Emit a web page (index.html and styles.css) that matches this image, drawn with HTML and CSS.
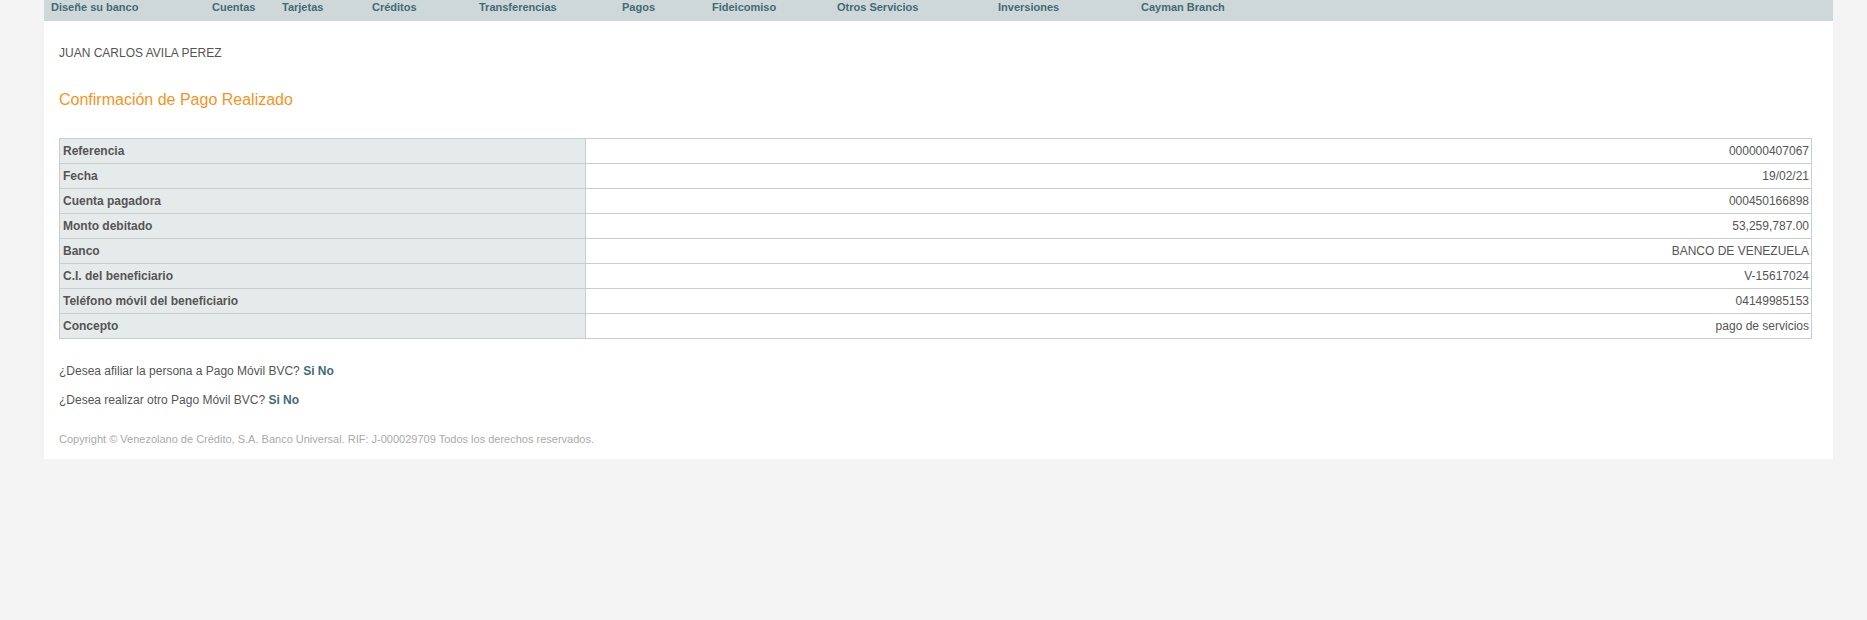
FILE: index.html
```html
<!DOCTYPE html>
<html lang="es">
<head>
<meta charset="utf-8">
<title>Confirmación de Pago Realizado</title>
<link rel="stylesheet" href="styles.css">
</head>
<body>
<div class="page">
  <nav class="nav">
    <a class="nav-item w1">Diseñe su banco</a>
    <a class="nav-item w2">Cuentas</a>
    <a class="nav-item w3">Tarjetas</a>
    <a class="nav-item w4">Créditos</a>
    <a class="nav-item w5">Transferencias</a>
    <a class="nav-item w6">Pagos</a>
    <a class="nav-item w7">Fideicomiso</a>
    <a class="nav-item w8">Otros Servicios</a>
    <a class="nav-item w9">Inversiones</a>
    <a class="nav-item">Cayman Branch</a>
  </nav>
  <main class="content">
    <div class="client">JUAN CARLOS AVILA PEREZ</div>
    <h1 class="title">Confirmación de Pago Realizado</h1>
    <table class="details">
      <tr><th>Referencia</th><td>000000407067</td></tr>
      <tr><th>Fecha</th><td>19/02/21</td></tr>
      <tr><th>Cuenta pagadora</th><td>000450166898</td></tr>
      <tr><th>Monto debitado</th><td>53,259,787.00</td></tr>
      <tr><th>Banco</th><td>BANCO DE VENEZUELA</td></tr>
      <tr><th>C.I. del beneficiario</th><td>V-15617024</td></tr>
      <tr><th>Teléfono móvil del beneficiario</th><td>04149985153</td></tr>
      <tr><th>Concepto</th><td>pago de servicios</td></tr>
    </table>
    <p class="question first">¿Desea afiliar la persona a Pago Móvil BVC? <a class="link">Si</a> <a class="link">No</a></p>
    <p class="question">¿Desea realizar otro Pago Móvil BVC? <a class="link">Si</a> <a class="link">No</a></p>
    <p class="copyright">Copyright © Venezolano de Crédito, S.A. Banco Universal. RIF: J-000029709 Todos los derechos reservados.</p>
  </main>
</div>
</body>
</html>
```

FILE: styles.css
```css
html, body {
  margin: 0;
  padding: 0;
  background: #f4f4f4;
}
body {
  font-family: "Liberation Sans", Arial, sans-serif;
  color: #555555;
}
.page {
  margin-left: 44px;
  width: 1789px;
  background: #ffffff;
}
.nav {
  display: flex;
  height: 21px;
  background: #cfd8d9;
  padding-left: 7px;
  box-sizing: border-box;
}
.nav-item {
  font-size: 11px;
  font-weight: bold;
  color: #426b75;
  line-height: 13px;
  padding-top: 1px;
  white-space: nowrap;
  cursor: pointer;
}
.w1 { width: 161px; }
.w2 { width: 70px; }
.w3 { width: 90px; }
.w4 { width: 107px; }
.w5 { width: 143px; }
.w6 { width: 90px; }
.w7 { width: 125px; }
.w8 { width: 161px; }
.w9 { width: 143px; }
.content {
  padding: 25px 21px 14px 15px;
}
.client {
  font-size: 12px;
  line-height: 14px;
  color: #555555;
}
.title {
  margin: 31px 0 0;
  font-size: 16px;
  font-weight: normal;
  line-height: 18px;
  color: #f7941d;
}
.details {
  margin-top: 29px;
  width: 100%;
  border-collapse: collapse;
  font-size: 12px;
}
.details th,
.details td {
  border: 1px solid #c9cdcd;
  padding: 5px 2px 5px 3px;
  line-height: 14px;
  color: #555555;
}
.details th {
  width: 30%;
  background: #e5eaea;
  text-align: left;
  font-weight: bold;
}
.details td {
  text-align: right;
  font-weight: normal;
}
.question {
  margin: 15px 0 0;
  font-size: 12px;
  line-height: 14px;
  color: #555555;
}
.question.first {
  margin-top: 25px;
}
.link {
  font-weight: bold;
  color: #426b75;
  cursor: pointer;
}
.copyright {
  margin: 26px 0 0;
  font-size: 11px;
  line-height: 12px;
  color: #aaaaaa;
}
```
